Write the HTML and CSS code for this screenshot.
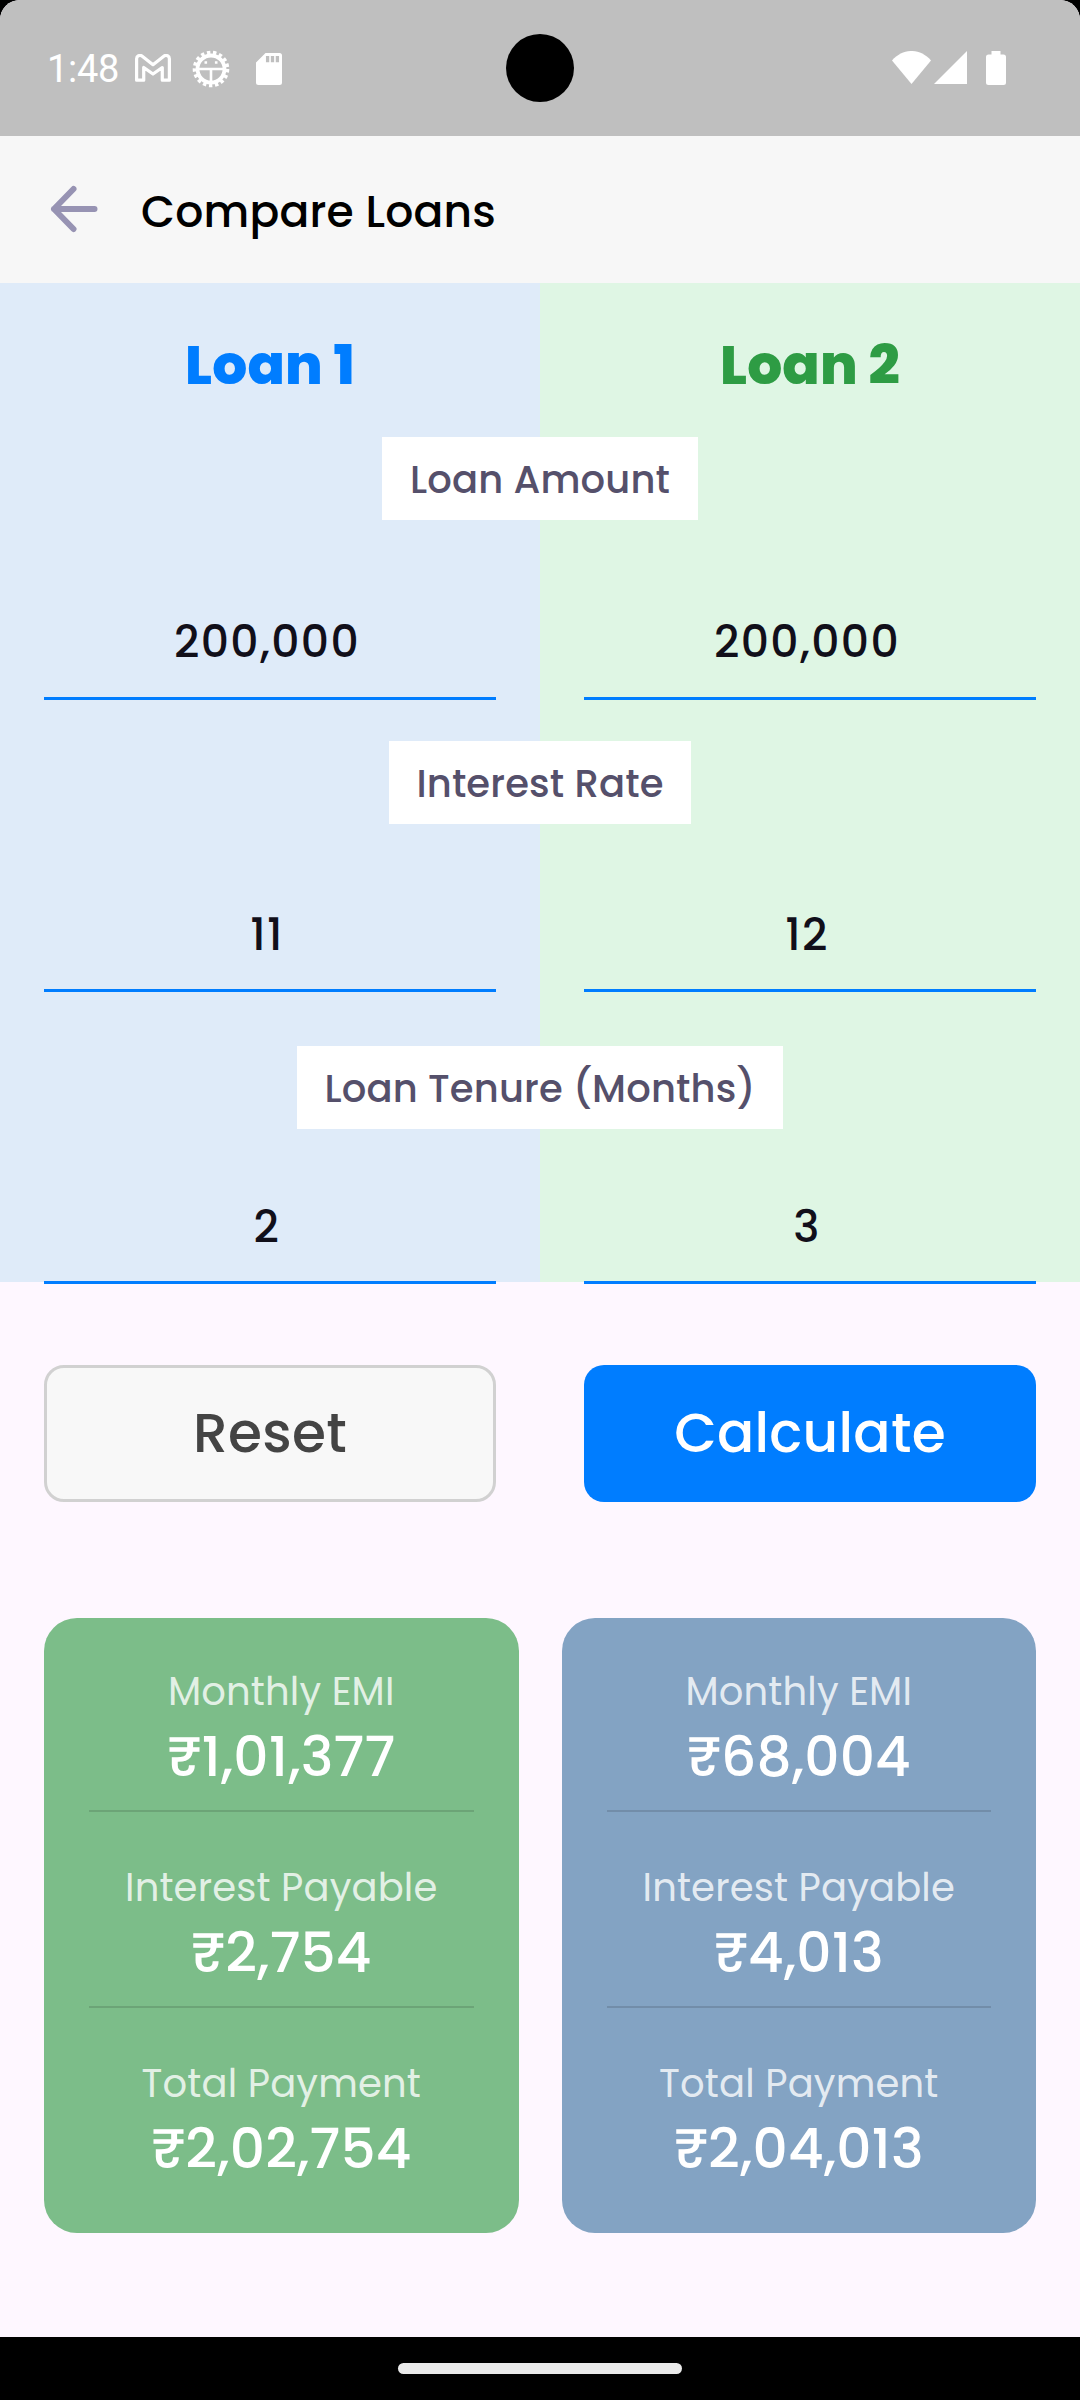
FILE: index.html
```
<!DOCTYPE html>
<html lang="en">
<head>
<meta charset="utf-8">
<title>Compare Loans</title>
<link rel="stylesheet" href="styles.css">
</head>
<body>
<div class="screen">
  <header class="status">
    <div class="status-bar">
      <span class="time">1:48</span>
      <svg class="ic-mail" width="36" height="28" viewBox="0 0 38 30" preserveAspectRatio="none" fill="none" stroke="#fff" stroke-width="3.400" stroke-linejoin="round"><path d="M1.700 28V5a3.500 3.500 0 0 1 5.600-2.800L19 11.500 30.700 2.200A3.500 3.500 0 0 1 36.300 5v23h-7.500V14.500L19 21.500 9.200 14.500V28z"/></svg>
      <svg class="ic-gear" width="38" height="38" viewBox="-19 -19 38 38" fill="none" stroke="#fff"><circle r="13.500" stroke-width="3.800"/><circle r="16.500" stroke-width="3.600" stroke-dasharray="3.400 2.698"/><path d="M-13 0H13M0 0V13" stroke-width="2.600"/><path d="M-6.500-6.500h2.600M3.900-6.500h2.600" stroke-width="2.600"/></svg>
      <svg class="ic-sd" width="26" height="32" viewBox="0 0 26 32"><path fill="#fff" d="M9.500 0H23.500A2.500 2.500 0 0 1 26 2.500V29.500A2.500 2.500 0 0 1 23.500 32H2.500A2.500 2.500 0 0 1 0 29.500V9.500z"/><path stroke="#bfbfbf" stroke-width="3.300" d="M11.600 3V9.300M16.500 3V9.300M21.400 3V9.300"/></svg>
      <span class="grow"></span>
      <svg class="ic-wifi" width="39" height="33" viewBox="0 0 39 33" fill="#fff"><path d="M0 9.500C11-3.200 28-3.200 39 9.500L19.500 33z"/></svg>
      <svg class="ic-cell" width="33" height="33" viewBox="0 0 33 33" fill="#fff"><path d="M0 33 33 0V33z"/></svg>
      <svg class="ic-batt" width="20" height="34" viewBox="0 0 20 34" fill="#fff"><path d="M5.500 0h9v3.500h3a2.500 2.500 0 0 1 2.500 2.500V31.500a2.500 2.500 0 0 1-2.500 2.500H2.500A2.500 2.500 0 0 1 0 31.500V6A2.500 2.500 0 0 1 2.500 3.500h3z"/></svg>
    </div>
    <div class="camera"></div>
  </header>

  <nav class="appbar">
    <svg width="48" height="48" viewBox="0 0 48 48" fill="none" stroke="#9793b3" stroke-width="6" stroke-linecap="round" stroke-linejoin="round"><path d="M23.500 4 4 24 23.500 44M4 24H44.500"/></svg>
    <h1 class="title">Compare Loans</h1>
  </nav>

  <main class="compare">
    <div class="heads">
      <h2 class="head head-one">Loan 1</h2>
      <h2 class="head head-two">Loan 2</h2>
    </div>
    <div class="chip chip-amount">Loan Amount</div>
    <div class="inputs inputs-amount">
      <div class="input">200,000</div>
      <div class="input">200,000</div>
    </div>
    <div class="chip chip-rate">Interest Rate</div>
    <div class="inputs inputs-rate">
      <div class="input">11</div>
      <div class="input">12</div>
    </div>
    <div class="chip chip-tenure">Loan Tenure (Months)</div>
    <div class="inputs inputs-tenure">
      <div class="input">2</div>
      <div class="input">3</div>
    </div>
  </main>

  <div class="actions">
    <button class="btn btn-reset">Reset</button>
    <button class="btn btn-calc">Calculate</button>
  </div>

  <section class="results">
    <div class="card card-green">
      <div class="item">
        <div class="label">Monthly EMI</div>
        <div class="value">₹1,01,377</div>
      </div>
      <div class="item">
        <div class="label">Interest Payable</div>
        <div class="value">₹2,754</div>
      </div>
      <div class="item">
        <div class="label">Total Payment</div>
        <div class="value">₹2,02,754</div>
      </div>
    </div>
    <div class="card card-blue">
      <div class="item">
        <div class="label">Monthly EMI</div>
        <div class="value">₹68,004</div>
      </div>
      <div class="item">
        <div class="label">Interest Payable</div>
        <div class="value">₹4,013</div>
      </div>
      <div class="item">
        <div class="label">Total Payment</div>
        <div class="value">₹2,04,013</div>
      </div>
    </div>
  </section>

  <footer class="gesture"><div class="pill"></div></footer>
</div>
</body>
</html>
```

FILE: styles.css
```
* { box-sizing: border-box; }
body { margin: 0; background: #000; }
svg { display: block; flex: none; }
h1, h2 { margin: 0; }

.screen {
  width: 1080px;
  height: 2400px;
  display: flex;
  flex-direction: column;
  overflow: hidden;
  background: #fef7ff;
  border-radius: 20px 20px 0 0;
  font-family: Poppins, Inter, sans-serif;
  font-weight: 500;
}

/* Status bar */
.status { position: relative; flex: none; height: 136px; background: #bfbfbf; }
.status-bar { display: flex; align-items: flex-start; height: 136px; padding: 0 74px 0 47px; }
.time { width: 88px; padding-top: 47px; font: 400 38px/45px Roboto, sans-serif; letter-spacing: -.3px; color: #fff; }
.ic-mail { margin-top: 54px; }
.ic-gear { margin: 50px 0 0 21px; }
.ic-sd { margin: 53px 0 0 26px; }
.grow { flex: 1; }
.ic-wifi { margin: 51px 3px 0 0; }
.ic-cell { margin: 51px 19px 0 0; }
.ic-batt { margin-top: 51px; }
.camera { position: absolute; left: 506px; top: 34px; width: 68px; height: 68px; border-radius: 50%; background: #000; }

/* App bar */
.appbar { flex: none; display: flex; height: 147px; padding: 49px 0 0 50px; background: #f7f7f7; }
.title { margin: 3px 0 0 43px; height: 48px; font-size: 44px; line-height: 48px; font-weight: 500; letter-spacing: .2px; color: #000; }

/* Comparison form */
.compare {
  flex: none;
  display: flex;
  flex-direction: column;
  align-items: center;
  height: 999px;
  background: linear-gradient(90deg, #dfebf9 50%, #dff6e4 50%);
}
.heads { flex: none; display: flex; width: 100%; padding-top: 47px; }
.head { flex: 1; text-align: center; font-size: 55px; line-height: 70px; font-weight: 800; letter-spacing: .15px; }
.head-one { color: #007dff; }
.head-two { color: #2e9c44; }
.chip {
  flex: none;
  height: 83px;
  background: #fff;
  color: #55506b;
  font-size: 38.5px;
  line-height: 85px;
  letter-spacing: .15px;
  text-align: center;
}
.chip-amount { width: 316px; margin-top: 37px; }
.chip-rate { width: 302px; margin-top: 41px; }
.chip-tenure { width: 486px; margin-top: 54px; }
.inputs { flex: none; display: flex; gap: 88px; width: 992px; line-height: 72px; }
.input {
  flex: 1;
  height: 93px;
  padding-right: 6px;
  border-bottom: 3px solid #007dff;
  font-size: 44px;
  letter-spacing: 1.375px;
  text-align: center;
  color: #110f1a;
}
.inputs-amount { margin-top: 87px; line-height: 70px; }
.inputs-rate { margin-top: 75px; }
.inputs-tenure { margin-top: 62px; }

/* Buttons */
.actions { flex: none; display: grid; grid-template-columns: 1fr 1fr; gap: 88px; margin-top: 83px; padding: 0 44px; }
.btn { height: 137px; padding: 0 0 2px; border: 0; border-radius: 20px; font: inherit; font-size: 55px; line-height: 80px; letter-spacing: .275px; }
.btn-reset { border: 3px solid #d1d1d1; background: #f8f8f8; color: #444; }
.btn-calc { background: #007dff; color: #fff; }

/* Results */
.results { flex: none; display: flex; gap: 43px; margin-top: 116px; padding: 0 44px; }
.card { flex: 1; height: 615px; padding: 0 45px; border-radius: 33px; text-align: center; letter-spacing: .15px; }
.card-green { background: #7cbd89; }
.card-blue { background: #83a3c3; }
.item { height: 196px; padding-top: 50px; border-bottom: 2px solid rgba(0, 0, 0, .13); }
.item:first-child { height: 194px; padding-top: 48px; }
.item:last-child { border: 0; }
.label { height: 52px; font-size: 38.5px; font-weight: 400; line-height: 52px; color: rgba(255, 255, 255, .8); }
.value { height: 78px; font-size: 55px; line-height: 78px; color: #fff; }

/* Gesture bar */
.gesture { flex: none; margin-top: auto; height: 63px; padding-top: 26px; background: #000; }
.pill { width: 284px; height: 11px; margin: 0 auto; border-radius: 6px; background: #eaeaea; }
```
